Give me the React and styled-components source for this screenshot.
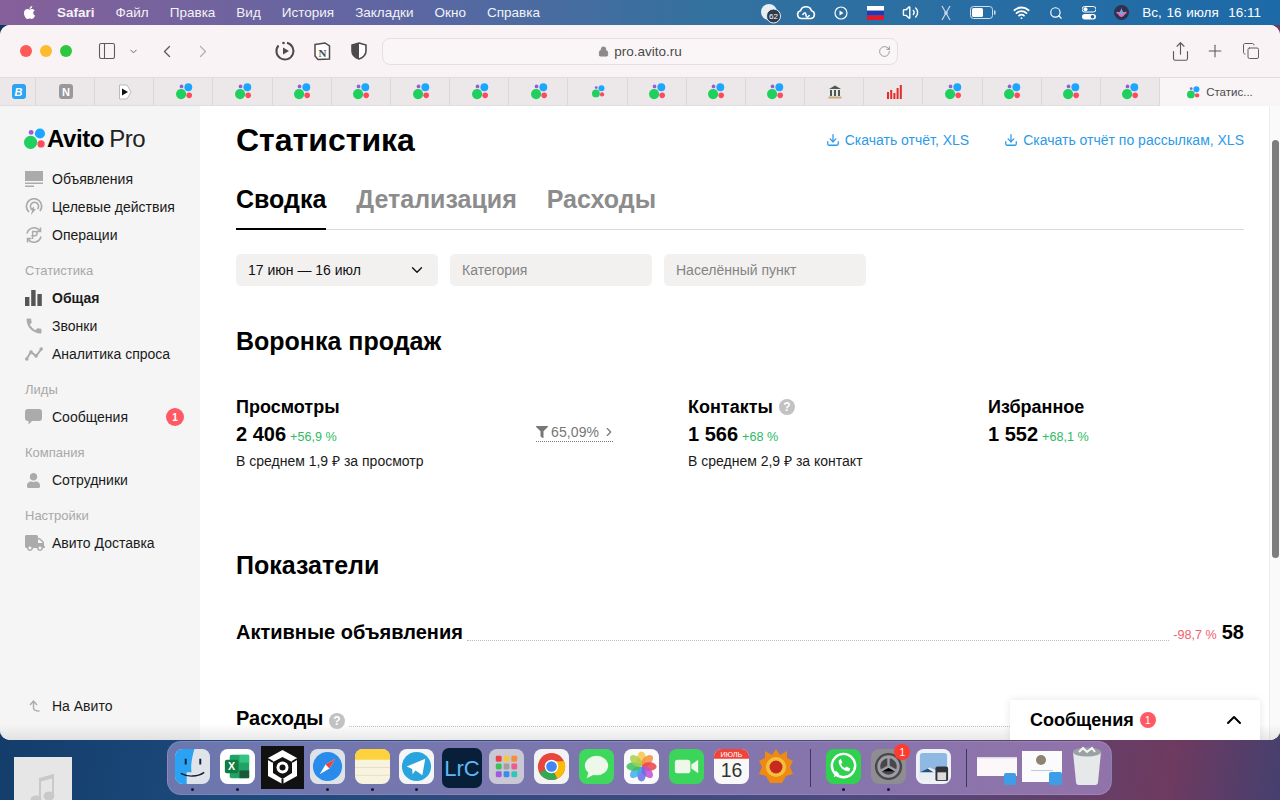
import React from "react";
import styled, { createGlobalStyle } from "styled-components";
import {
  ChevronDown,
  ChevronLeft,
  ChevronRight,
  ChevronUp,
  Download,
  Lock,
  Plus,
  RotateCw,
  Search,
  Share,
  Volume2,
  Wifi,
  PanelLeft,
  Copy,
} from "lucide-react";
import { FaApple, FaTruck, FaUser, FaFilter } from "react-icons/fa";
import { MdCall } from "react-icons/md";

const GlobalStyle = createGlobalStyle`
  html, body {
    margin: 0;
    padding: 0;
    width: 1280px;
    height: 800px;
    overflow: hidden;
    font-family: "Liberation Sans", Arial, sans-serif;
    color: #000;
  }
  * { box-sizing: border-box; }
`;

const Screen = styled.div`
  position: relative;
  width: 1280px;
  height: 800px;
  display: flex;
  flex-direction: column;
  overflow: hidden;
  background: linear-gradient(100deg, #0f3560 0%, #1b4a7c 25%, #4d4a80 70%, #6e3a60 92%, #45406f 100%);
`;

/* menu bar */
const MenuBar = styled.div`
  height: 25px;
  flex: none;
  display: flex;
  align-items: center;
  padding: 0 19px 0 22px;
  color: #fff;
  font-size: 13.5px;
  background: linear-gradient(90deg, #86609a 0%, #5f66a2 30%, #33719f 55%, #1d6aa8 100%);
`;

const MenuItems = styled.div`
  display: flex;
  align-items: center;
  gap: 21px;
  opacity: 0.92;
`;

const MenuItem = styled.span`
  font-weight: ${(p) => (p.$bold ? 700 : 400)};
`;

const StatusIcons = styled.div`
  margin-left: auto;
  display: flex;
  align-items: center;
  height: 25px;
`;

const StatusSlot = styled.div`
  width: ${(p) => p.$w || 35}px;
  display: flex;
  justify-content: center;
  align-items: center;
`;

const Clock = styled.span`
  margin-left: 6px;
  word-spacing: 1px;
`;

/* safari window */
const Window = styled.div`
  position: relative;
  height: 715px;
  flex: none;
  display: flex;
  flex-direction: column;
  background: #fff;
  border-radius: 10px;
  overflow: hidden;
`;

const Toolbar = styled.div`
  height: 52px;
  flex: none;
  display: flex;
  align-items: center;
  padding-left: 20px;
  background: #f9f3f5;
  color: #5c5a5b;
`;

const Light = styled.span`
  width: 12px;
  height: 12px;
  border-radius: 50%;
  margin-right: 8px;
  background: ${(p) => p.$color};
`;

const ToolSlot = styled.div`
  width: ${(p) => p.$w}px;
  margin-left: ${(p) => p.$ml || 0}px;
  display: flex;
  justify-content: center;
  align-items: center;
  color: ${(p) => p.$color || "#5c5a5b"};
`;

const UrlBar = styled.div`
  position: relative;
  width: 516px;
  height: 27px;
  margin-left: 11px;
  display: flex;
  align-items: center;
  justify-content: center;
  gap: 5px;
  background: #faf6f7;
  border: 1px solid #e4dfe0;
  border-radius: 8px;
  font-size: 13.5px;
  color: #4b4a4a;
`;

const Reload = styled.span`
  position: absolute;
  right: 6px;
  top: 6px;
  color: #777;
  display: flex;
`;

const TabBar = styled.div`
  height: 29px;
  flex: none;
  display: flex;
  background: #ece7e8;
  border-top: 1px solid #e0dbdc;
  border-bottom: 1px solid #e2dddf;
`;

const Tab = styled.div`
  width: ${(p) => p.$w}px;
  flex: none;
  display: flex;
  align-items: center;
  justify-content: center;
  padding-left: 2px;
  border-right: 1px solid #dcd7d8;
`;

const ActiveTab = styled.div`
  flex: 1;
  display: flex;
  align-items: center;
  justify-content: center;
  gap: 6px;
  background: #f9f4f6;
  font-size: 11.5px;
  color: #4a4a4a;
  margin-bottom: -1px;
`;

const LetterIcon = styled.span`
  width: 14px;
  height: 15px;
  display: flex;
  align-items: center;
  justify-content: center;
  border-radius: 3px;
  font-size: 11px;
  font-weight: 700;
  font-style: ${(p) => (p.$italic ? "italic" : "normal")};
  color: #fff;
  background: ${(p) => p.$bg};
`;

/* page */
const Body = styled.div`
  flex: 1;
  min-height: 0;
  display: flex;
`;

const Sidebar = styled.aside`
  width: 200px;
  flex: none;
  display: flex;
  flex-direction: column;
  padding: 18px 0 20px 25px;
  background: #f5f5f5;
`;

const Logo = styled.div`
  height: 30px;
  display: flex;
  align-items: center;
  margin: 0 0 11px -1px;
  font-size: 24px;
  letter-spacing: -0.4px;
`;

const LogoBold = styled.span`
  font-weight: 700;
  margin-left: 1px;
`;

const LogoLight = styled.span`
  font-weight: 400;
  margin-left: 5px;
  color: #222;
`;

const NavItem = styled.div`
  height: 28px;
  display: flex;
  align-items: center;
  font-size: 14px;
  font-weight: ${(p) => (p.$active ? 700 : 400)};
  color: #1a1a1a;
`;

const NavIcon = styled.span`
  width: 27px;
  flex: none;
  display: flex;
  align-items: center;
  color: ${(p) => (p.$active ? "#555" : "#ababab")};
`;

const NavBadge = styled.span`
  width: 18px;
  height: 18px;
  margin-left: auto;
  margin-right: 16px;
  border-radius: 50%;
  display: flex;
  align-items: center;
  justify-content: center;
  background: #ff5a63;
  color: #fff;
  font-size: 10px;
  font-weight: 700;
`;

const NavGroup = styled.div`
  height: 35px;
  padding-top: 15px;
  line-height: 14px;
  font-size: 13px;
  color: #a8a8a8;
`;

const BackLink = styled(NavItem)`
  margin-top: auto;
`;

const Main = styled.main`
  flex: 1;
  min-width: 0;
  padding: 0 36px;
  background: #fff;
`;

const TitleRow = styled.div`
  height: 68px;
  display: flex;
  align-items: center;
  justify-content: space-between;
`;

const Title = styled.h1`
  margin: 0;
  font-size: 32px;
  font-weight: 700;
`;

const Reports = styled.div`
  display: flex;
  gap: 35px;
`;

const ReportLink = styled.a`
  display: flex;
  align-items: center;
  gap: 5px;
  font-size: 14px;
  color: #2d9ae8;
`;

const Tabs = styled.div`
  height: 56px;
  display: flex;
  gap: 30px;
  border-bottom: 1px solid #d9d9d9;
`;

const PageTab = styled.div`
  height: 56px;
  line-height: 51px;
  font-size: 25px;
  font-weight: 700;
  color: ${(p) => (p.$active ? "#000" : "#8c8c8c")};
  border-bottom: ${(p) => (p.$active ? "2px solid #000" : "none")};
`;

const Filters = styled.div`
  display: flex;
  gap: 12px;
  margin-top: 24px;
`;

const Filter = styled.div`
  width: 202px;
  height: 32px;
  padding: 0 12px;
  display: flex;
  align-items: center;
  justify-content: space-between;
  border-radius: 5px;
  background: #f2f1f0;
  font-size: 14px;
  color: ${(p) => (p.$muted ? "#848484" : "#111")};
`;

const SectionTitle = styled.h2`
  margin: ${(p) => p.$mt}px 0 0;
  height: 28px;
  line-height: 28px;
  font-size: 25px;
  font-weight: 700;
`;

const Funnel = styled.div`
  display: grid;
  grid-template-columns: 300px 152px 300px 1fr;
  margin-top: 40px;
  height: 95px;
`;

const StatName = styled.div`
  display: flex;
  align-items: center;
  gap: 6px;
  height: 24px;
  font-size: 18px;
  font-weight: 700;
`;

const StatLine = styled.div`
  display: flex;
  align-items: baseline;
  gap: 4px;
  height: 32px;
  line-height: 30px;
  font-size: 20px;
  font-weight: 700;
`;

const Delta = styled.span`
  font-size: 12.6px;
  font-weight: 400;
  color: ${(p) => (p.$down ? "#f0606e" : "#2dbb64")};
`;

const StatNote = styled.div`
  font-size: 14px;
  line-height: 18px;
  color: #1a1a1a;
  margin-top: 1px;
`;

const Help = styled.span`
  width: 16px;
  height: 16px;
  border-radius: 50%;
  display: inline-flex;
  align-items: center;
  justify-content: center;
  background: #c2c2c2;
  color: #fff;
  font-size: 12px;
  font-weight: 700;
`;

const Conversion = styled.div`
  align-self: start;
  justify-self: start;
  display: flex;
  align-items: center;
  gap: 3px;
  margin-top: 29px;
  padding-bottom: 1px;
  font-size: 14px;
  letter-spacing: 0.1px;
  color: #777;
  border-bottom: 1px dotted #777;
`;

const MetricRow = styled.div`
  display: flex;
  align-items: baseline;
  margin-top: ${(p) => p.$mt}px;
  height: 28px;
  font-size: 20px;
  font-weight: 700;
`;

const Leader = styled.span`
  flex: 1;
  align-self: flex-end;
  margin: 0 4px 8px;
  border-bottom: 1px dotted #bdbdbd;
`;

const MetricValue = styled.span`
  margin-left: 5px;
`;

/* things lying over the page */
const ScrollTrack = styled.div`
  position: absolute;
  top: 81px;
  right: 0;
  bottom: 0;
  width: 11px;
  background: #fafafa;
  border-left: 1px solid #ececec;
`;

const ScrollThumb = styled.div`
  position: absolute;
  top: 34px;
  left: 2px;
  width: 7px;
  height: 418px;
  border-radius: 4px;
  background: #7d7d7d;
`;

const MessagesPanel = styled.div`
  position: absolute;
  left: 1010px;
  bottom: 0;
  width: 250px;
  height: 40px;
  padding: 0 14px 0 20px;
  display: flex;
  align-items: center;
  gap: 6px;
  background: #fff;
  box-shadow: 0 0 8px rgba(0, 0, 0, 0.1);
  font-size: 18px;
  font-weight: 700;
`;

const PanelBadge = styled.span`
  width: 16px;
  height: 16px;
  border-radius: 50%;
  display: flex;
  align-items: center;
  justify-content: center;
  background: #ff5a63;
  color: #fff;
  font-size: 10px;
  font-weight: 400;
`;

const BottomFade = styled.div`
  position: absolute;
  left: 0;
  right: 0;
  bottom: 0;
  height: 16px;
  pointer-events: none;
  background: linear-gradient(180deg, rgba(200, 200, 200, 0), rgba(190, 190, 190, 0.35));
`;

/* desktop and dock */
const Desktop = styled.div`
  position: relative;
  flex: 1;
  display: flex;
  padding: 1px 0 0 167px;
`;

const DesktopFile = styled.div`
  position: absolute;
  left: 14px;
  top: 17px;
  width: 58px;
  height: 60px;
  display: flex;
  justify-content: center;
  padding-top: 16px;
  background: #e6e6e6;
  color: #c9c9c9;
`;

const Dock = styled.div`
  width: 945px;
  height: 54px;
  display: flex;
  padding: 0 0 0 2px;
  border-radius: 14px;
  background: linear-gradient(90deg, #6b77ae 0%, #7f76ae 50%, #9173aa 100%);
  border: 1px solid rgba(255, 255, 255, 0.12);
`;

const DockSlot = styled.div`
  position: relative;
  width: 44.9px;
  flex: none;
  display: flex;
  justify-content: center;
  padding-top: 7px;
  &::after {
    content: "";
    display: ${(p) => (p.$running ? "block" : "none")};
    position: absolute;
    left: 50%;
    bottom: 3px;
    width: 3px;
    height: 3px;
    margin-left: -1.5px;
    border-radius: 50%;
    background: #14182c;
  }
`;

const DockDivider = styled.div`
  width: 1px;
  height: 38px;
  margin: 7px ${(p) => p.$mr}px 0 ${(p) => p.$ml}px;
  flex: none;
  background: #3c3a5a;
`;

const DockBadge = styled.span`
  position: absolute;
  top: 2px;
  right: 1px;
  width: 16px;
  height: 16px;
  border-radius: 50%;
  display: flex;
  align-items: center;
  justify-content: center;
  background: #ff3b30;
  color: #fff;
  font-size: 10px;
`;

const AvitoMark = ({ size = 14 }) => (
  <svg width={size} height={size} viewBox="0 0 20 20">
    <circle cx="6" cy="13" r="6" fill="#1fd05f" />
    <circle cx="14.5" cy="5" r="4.6" fill="#1ba7ff" />
    <circle cx="15.5" cy="14.5" r="3.3" fill="#ff4a5c" />
    <circle cx="6.5" cy="4" r="2.2" fill="#9a5cdc" />
  </svg>
);

const ListIcon = () => (
  <svg width="18" height="16" viewBox="0 0 18 16" fill="currentColor">
    <rect x="0" y="0" width="18" height="10" />
    <rect x="0" y="11.5" width="18" height="1.5" />
    <rect x="0" y="14.5" width="9" height="1.5" />
  </svg>
);

const TargetIcon = () => (
  <svg width="18" height="18" viewBox="0 0 18 18" fill="none" stroke="currentColor" strokeWidth="1.7">
    <path d="M4 14A7.6 7.6 0 1 1 15 13" />
    <path d="M6.5 11A4 4 0 1 1 12.5 11" />
    <path d="M9 8.5 L5 12 L7 12 L6 17 L11 11 L9 11 Z" fill="currentColor" stroke="none" />
  </svg>
);

const OperationsIcon = () => (
  <svg width="18" height="18" viewBox="0 0 18 18" fill="none" stroke="currentColor" strokeWidth="1.6">
    <path d="M2 7.5A7.2 7.2 0 0 1 15 5" />
    <path d="M16 10.5A7.2 7.2 0 0 1 3 13" />
    <path d="M15.5 1.5V5.5H11.5M2.5 16.5V12.5H6.5" />
    <path d="M7.6 13V5.5H10a2 2 0 0 1 0 4.2H6.4" strokeWidth="1.4" />
  </svg>
);

const BarsIcon = () => (
  <svg width="17" height="16" viewBox="0 0 17 16" fill="currentColor">
    <rect x="0" y="7" width="4.4" height="9" />
    <rect x="6.2" y="0" width="4.4" height="16" />
    <rect x="12.4" y="4" width="4.4" height="12" />
  </svg>
);

const TrendIcon = () => (
  <svg width="18" height="14" viewBox="0 0 18 14" fill="none" stroke="currentColor" strokeWidth="2">
    <path d="M1.5 12 L6 5 L11 9 L16.5 2" />
    <g fill="currentColor" stroke="none">
      <circle cx="1.8" cy="12" r="1.8" />
      <circle cx="6" cy="5" r="1.8" />
      <circle cx="11" cy="9" r="1.8" />
      <circle cx="16.2" cy="2" r="1.8" />
    </g>
  </svg>
);

const ChatIcon = () => (
  <svg width="17" height="16" viewBox="0 0 17 16" fill="currentColor">
    <path d="M3 0H14a3 3 0 0 1 3 3V9a3 3 0 0 1-3 3H7L3.5 15.5V12H3a3 3 0 0 1-3-3V3a3 3 0 0 1 3-3Z" />
  </svg>
);

const BackArrow = () => (
  <svg width="14" height="14" viewBox="0 0 14 14" fill="none" stroke="currentColor" strokeWidth="1.4" style={{ marginLeft: 3 }}>
    <path d="M2 6 L5.5 2 L9 6M5.5 2V9c0 2 1.5 3 6 3" />
  </svg>
);

const MusicNote = () => (
  <svg width="26" height="34" viewBox="0 0 26 34" fill="currentColor">
    <path d="M9 5 L24 1 V5 L11 8.500 V27 H9Z" />
    <rect x="22" y="1" width="2" height="22" />
    <ellipse cx="6" cy="27" rx="5.500" ry="4.500" />
    <ellipse cx="19" cy="23" rx="5.500" ry="4.500" />
  </svg>
);

const ExtensionPlay = () => (
  <svg width="22" height="22" viewBox="0 0 22 22" fill="none" stroke="#4c4a4b" strokeWidth="2">
    <path d="M13 2.8A8.5 8.5 0 1 1 4.5 5.5" />
    <circle cx="9.5" cy="3" r="1.3" fill="#4c4a4b" stroke="none" />
    <path d="M9 7.5 L15 11 L9 14.5 Z" fill="#4c4a4b" stroke="none" />
  </svg>
);

const NotionGlyph = () => (
  <svg width="20" height="20" viewBox="0 0 20 20">
    <path d="M3 3.5 L13 2 L17.5 5 V18 L6 18.5 L3 15 Z" fill="#fff" stroke="#4c4a4b" strokeWidth="1.5" />
    <text x="6.5" y="15.5" fontSize="11" fontWeight="700" fontFamily="Liberation Serif, serif" fill="#4c4a4b">N</text>
  </svg>
);

const ShieldGlyph = () => (
  <svg width="16" height="18" viewBox="0 0 16 18">
    <path d="M8 1 L15 3 V9c0 4-3 6.5-7 8-4-1.500-7-4-7-8V3Z" fill="#fff" stroke="#4c4a4b" strokeWidth="1.6" />
    <path d="M8 1 V17c-4-1.500-7-4-7-8V3Z" fill="#4c4a4b" />
  </svg>
);

const PlayTab = () => (
  <svg width="14" height="16" viewBox="0 0 14 16">
    <path d="M1.500 1H9l4 7-4 7H1.500Z" fill="#fff" stroke="#bbb" />
    <path d="M4 4.500 L10 8 L4 11.500Z" fill="#111" />
  </svg>
);

const BankGlyph = () => (
  <svg width="14" height="14" viewBox="0 0 14 14" fill="#4e5a4f">
    <path d="M1 4 L7 0.500 L13 4Z" />
    <rect x="2" y="5" width="2" height="6" />
    <rect x="6" y="5" width="2" height="6" />
    <rect x="10" y="5" width="2" height="6" />
    <rect x="0.500" y="11.500" width="13" height="2" fill="#c4ad7c" />
  </svg>
);

const ChartGlyph = () => (
  <svg width="15" height="15" viewBox="0 0 15 15" fill="#e32b2b">
    <rect x="0" y="8" width="2" height="7" />
    <rect x="3.200" y="6" width="2" height="9" />
    <rect x="6.400" y="9" width="2" height="6" />
    <rect x="9.600" y="4" width="2" height="11" />
    <rect x="12.800" y="1" width="2" height="14" />
  </svg>
);

const FlagGlyph = () => (
  <svg width="17" height="14" viewBox="0 0 17 14">
    <rect width="17" height="4.700" fill="#fff" />
    <rect y="4.700" width="17" height="4.700" fill="#2138b5" />
    <rect y="9.400" width="17" height="4.600" fill="#e0192c" />
  </svg>
);

const CcGlyph = () => (
  <svg width="20" height="14" viewBox="0 0 20 14" fill="none" stroke="#fff" strokeWidth="1.600">
    <path d="M5 12.500a4 4 0 0 1-.5-7.800 5.800 5.800 0 0 1 11 0 4 4 0 0 1-.5 7.800Z" />
    <path d="M6.500 9c2-3 3-3 3.500 0s2 3 3.500 0" />
  </svg>
);

const BadgeGlyph = () => (
  <svg width="22" height="22" viewBox="0 0 22 22">
    <circle cx="9" cy="10" r="8" fill="#e8eef4" />
    <circle cx="13.500" cy="14" r="7" fill="#2f3a4c" stroke="#e8eef4" />
    <text x="13.500" y="17" fontSize="8" fill="#fff" textAnchor="middle" fontFamily="Liberation Sans, sans-serif">62</text>
  </svg>
);

const PlayCircle = () => (
  <svg width="14" height="14" viewBox="0 0 14 14" fill="none" stroke="#fff" strokeWidth="1.200">
    <circle cx="7" cy="7" r="6" />
    <path d="M5.500 4.500 L9.500 7 L5.500 9.500Z" fill="#fff" stroke="none" />
  </svg>
);

const MuteGlyph = () => (
  <svg width="14" height="16" viewBox="0 0 14 16" stroke="#c8d6e6" strokeWidth="1.200" fill="none">
    <path d="M3 1 L11 15M11 1 L3 15" />
    <circle cx="7" cy="8" r="1.200" fill="#c8d6e6" />
  </svg>
);

const BatteryGlyph = () => (
  <svg width="26" height="13" viewBox="0 0 26 13">
    <rect x="0.500" y="0.500" width="22" height="12" rx="3" fill="none" stroke="#cfe0ef" />
    <rect x="2" y="2" width="11" height="9" rx="1.500" fill="#fff" />
    <rect x="24" y="4.500" width="1.500" height="4" fill="#cfe0ef" />
  </svg>
);

const ControlGlyph = () => (
  <svg width="14" height="14" viewBox="0 0 14 14">
    <rect y="0.500" width="14" height="5.500" rx="2.750" fill="none" stroke="#fff" />
    <circle cx="3.500" cy="3.250" r="2" fill="#fff" />
    <rect y="8" width="14" height="5.500" rx="2.750" fill="#fff" />
    <circle cx="10.500" cy="10.750" r="1.800" fill="#24649f" />
  </svg>
);

const SiriGlyph = () => (
  <svg width="15" height="15" viewBox="0 0 15 15">
    <circle cx="7.500" cy="7.500" r="7.500" fill="#2b3350" />
    <path d="M2 8c2-4 3 3 5.500-5 2 8 3 1 5.500 5-3 1-3 4-5.500 4S5 9 2 8Z" fill="#e46ca6" />
    <path d="M7.500 4c1 4 2 4 3 4-1 2-5 2-6 0 1 0 2 0 3-4Z" fill="#5fb0ef" />
  </svg>
);

const Squircle = ({ fill, children }) => (
  <svg width="35" height="35" viewBox="0 0 36 36">
    <rect width="36" height="36" rx="8" fill={fill} />
    {children}
  </svg>
);

const dockIcons = {
  finder: (
    <Squircle fill="#dfe4ea">
      <path d="M0 8a8 8 0 0 1 8-8H20C17 10 16 18 17 24H12V36H8a8 8 0 0 1-8-8Z" fill="#2aa3f5" />
      <path d="M6 25c7 4 17 4 24-1" fill="none" stroke="#123" strokeWidth="1.500" />
      <path d="M11 10v6M26 10v6" stroke="#123" strokeWidth="2" />
    </Squircle>
  ),
  excel: (
    <Squircle fill="#fff">
      <rect x="10" y="6" width="20" height="24" rx="2" fill="#21a366" />
      <rect x="20" y="6" width="10" height="8" fill="#33c481" />
      <rect x="20" y="22" width="10" height="8" fill="#185c37" />
      <rect x="5" y="11" width="14" height="14" rx="2" fill="#107c41" />
      <text x="12" y="22" fontSize="11" fontWeight="700" fill="#fff" textAnchor="middle" fontFamily="Liberation Sans, sans-serif">X</text>
    </Squircle>
  ),
  hive: (
    <svg width="43" height="43" viewBox="0 0 43 43" style={{ marginTop: -3 }}>
      <rect width="43" height="43" fill="#111" />
      <path d="M21.500 4 L36 12 V30 L21.500 38 L7 30 V12Z" fill="#fff" />
      <path d="M21.500 11 L12 16 V27 L21.500 33 L31 27 V16Z" fill="#111" />
      <circle cx="21.500" cy="21.500" r="6" fill="#fff" />
      <circle cx="21.500" cy="21.500" r="3" fill="#111" />
      <path d="M21.500 33V38M7 13 L12 16M36 13 L31 16" stroke="#111" strokeWidth="2" />
    </svg>
  ),
  safari: (
    <Squircle fill="#dfe3e8">
      <circle cx="18" cy="18" r="15" fill="#2a8cea" />
      <path d="M26 10 L20 20 L10 26 L16 16Z" fill="#fff" />
      <path d="M26 10 L20 20 L16 16Z" fill="#f0433a" />
    </Squircle>
  ),
  notes: (
    <Squircle fill="#f7f3df">
      <path d="M0 8a8 8 0 0 1 8-8H28a8 8 0 0 1 8 8V11H0Z" fill="#fdd23c" />
      <path d="M0 19H36M0 27H36" stroke="#e4dfc8" />
    </Squircle>
  ),
  telegram: (
    <Squircle fill="#f4f5f7">
      <circle cx="18" cy="18" r="15" fill="#2aa4de" />
      <path d="M8 18 L27 10 L24 27 L17 22 L14 26 L13.500 20.500Z" fill="#fff" />
    </Squircle>
  ),
  lrc: (
    <svg width="40" height="40" viewBox="0 0 40 40" style={{ marginTop: -1 }}>
      <rect width="40" height="40" rx="7" fill="#071f38" />
      <text x="20" y="28" fontSize="22" fill="#5fb8f5" textAnchor="middle" fontFamily="Liberation Sans, sans-serif">LrC</text>
    </svg>
  ),
  launchpad: (
    <Squircle fill="#c9c8d4">
      {["#e8424a", "#f6c544", "#f58e3c", "#3cc05e", "#a0a0a0", "#ee5b8e", "#9a5ce0", "#3c8cf0", "#2ec7b8"].map((c, i) => (
        <rect key={c} x={7 + (i % 3) * 8} y={7 + Math.floor(i / 3) * 8} width="6" height="6" rx="1.500" fill={c} />
      ))}
    </Squircle>
  ),
  chrome: (
    <Squircle fill="#f3f3f3">
      <circle cx="18" cy="18" r="14" fill="#e8453c" />
      <path d="M18 18 L5.500 24.500A14 14 0 0 0 24 30.500Z" fill="#34a853" />
      <path d="M18 18 L24 30.500A14 14 0 0 0 31 12.500 L18 12.500Z" fill="#fbbc05" />
      <circle cx="18" cy="18" r="7" fill="#fff" />
      <circle cx="18" cy="18" r="5.500" fill="#4285f4" />
    </Squircle>
  ),
  messages: (
    <Squircle fill="#3ed95c">
      <ellipse cx="18" cy="17" rx="12" ry="10" fill="#eef8ea" />
      <path d="M10 23 L8 30 L16 26Z" fill="#eef8ea" />
    </Squircle>
  ),
  photos: (
    <Squircle fill="#fafafa">
      {["#f6c544", "#f58e3c", "#e8424a", "#c04fd0", "#6a6ae8", "#3cb0e8", "#3cc05e", "#a8d04a"].map((c, i) => (
        <ellipse key={c} cx="18" cy="10" rx="4.500" ry="7.500" fill={c} opacity="0.85" transform={`rotate(${i * 45} 18 18)`} />
      ))}
    </Squircle>
  ),
  facetime: (
    <Squircle fill="#3ad55a">
      <rect x="6" y="11" width="16" height="14" rx="3" fill="#eef8ea" />
      <path d="M23 16 L30 11 V25 L23 20Z" fill="#eef8ea" />
    </Squircle>
  ),
  calendar: (
    <Squircle fill="#f8f8f8">
      <path d="M0 8a8 8 0 0 1 8-8H28a8 8 0 0 1 8 8V10H0Z" fill="#f0433a" />
      <text x="18" y="8" fontSize="7.500" fill="#fff" textAnchor="middle" fontFamily="Liberation Sans, sans-serif">ИЮЛЬ</text>
      <text x="18" y="29" fontSize="20" fill="#333" textAnchor="middle" fontFamily="Liberation Sans, sans-serif">16</text>
    </Squircle>
  ),
  xnview: (
    <svg width="38" height="38" viewBox="0 0 38 38" style={{ marginTop: -2 }}>
      <path d="M19 2 L23 8 L30 4 L30 11 L36 14 L33 20 L36 27 L29 29 L25 36 H13 L9 29 L2 27 L5 20 L2 14 L8 11 L8 4 L15 8Z" fill="#ee8a12" />
      <circle cx="19" cy="20" r="10" fill="#f2c040" />
      <circle cx="19" cy="20" r="6.500" fill="#c8281e" />
    </svg>
  ),
  whatsapp: (
    <Squircle fill="#2fd14e">
      <circle cx="18" cy="17" r="12" fill="none" stroke="#fff" strokeWidth="2.500" />
      <path d="M8 29 L10 22 L14 26Z" fill="#fff" />
      <path d="M13 12c0 6 5 11 11 11l1-3-4-2-1.500 1.500c-2-.5-3.500-2-4-4L17 14l-2-4Z" fill="#fff" />
    </Squircle>
  ),
  settings: (
    <Squircle fill="#8d8d92">
      <circle cx="18" cy="18" r="14" fill="#47474c" />
      <circle cx="18" cy="18" r="10" fill="none" stroke="#9c9ca2" strokeWidth="3" />
      <path d="M18 8V18M9 23 L18 18 L27 23" stroke="#9c9ca2" strokeWidth="2.500" />
    </Squircle>
  ),
  preview: (
    <Squircle fill="#eef1f5">
      <rect x="4" y="4" width="28" height="28" rx="3" fill="#8fb8e2" />
      <path d="M4 24 L14 19 L32 27 V32 H4Z" fill="#e8eef2" />
      <path d="M4 24 L12 20 L18 24Z" fill="#23507e" />
      <rect x="20" y="18" width="13" height="15" rx="2" fill="#33343a" />
      <rect x="22" y="24" width="9" height="8" fill="#dcdcdc" />
    </Squircle>
  ),
  thumbA: (
    <svg width="42" height="37" viewBox="0 0 42 37">
      <rect x="1" y="8" width="40" height="19" fill="#fcf7f9" />
      <rect x="1" y="8" width="40" height="1.500" fill="#dedbe6" />
      <rect x="28" y="24" width="12" height="12" rx="2" fill="#3f9de8" />
    </svg>
  ),
  thumbB: (
    <svg width="42" height="38" viewBox="0 0 42 38" style={{ marginTop: -1 }}>
      <rect x="1" y="3" width="40" height="31" fill="#fbfbfb" />
      <circle cx="20" cy="12" r="5" fill="#8c8470" />
      <rect x="10" y="22" width="22" height="1" fill="#b8cde0" />
      <rect x="28" y="24" width="13" height="13" rx="2" fill="#3f9de8" />
    </svg>
  ),
  trash: (
    <svg width="32" height="40" viewBox="0 0 32 40" style={{ marginTop: -3, flex: "none" }}>
      <path d="M2 6 L5 36a3 3 0 0 0 3 3H24a3 3 0 0 0 3-3 L30 6Z" fill="#e6e9ea" />
      <ellipse cx="16" cy="6" rx="14" ry="4.500" fill="#9aa0a3" />
      <path d="M8 6 L12 2 L16 6 L21 2 L24 6" stroke="#f4f4f4" strokeWidth="2" fill="none" />
    </svg>
  ),
};

const tabs = ["v", "n", "p", "a", "a", "a", "a", "a", "a", "a", "s", "a", "a", "a", "b", "c", "a", "a", "a", "a"];

const tabIcon = (kind) => {
  if (kind === "v") return <LetterIcon $bg="#2ba4f2" $italic>В</LetterIcon>;
  if (kind === "n") return <LetterIcon $bg="#9a989c">N</LetterIcon>;
  if (kind === "p") return <PlayTab />;
  if (kind === "b") return <BankGlyph />;
  if (kind === "c") return <ChartGlyph />;
  return <AvitoMark size={kind === "s" ? 13 : 17} />;
};

const menu = ["Файл", "Правка", "Вид", "История", "Закладки", "Окно", "Справка"];

const leftDock = [
  ["finder", true], ["excel", true], ["hive", false], ["safari", true], ["notes", true], ["telegram", true],
  ["lrc", false], ["launchpad", false], ["chrome", false], ["messages", false], ["photos", false],
  ["facetime", false], ["calendar", false], ["xnview", false],
];

export default function App() {
  return (
    <Screen>
      <GlobalStyle />
      <MenuBar>
        <FaApple size={15} style={{ marginRight: 20 }} />
        <MenuItems>
          <MenuItem $bold>Safari</MenuItem>
          {menu.map((m) => <MenuItem key={m}>{m}</MenuItem>)}
        </MenuItems>
        <StatusIcons>
          <StatusSlot><BadgeGlyph /></StatusSlot>
          <StatusSlot><CcGlyph /></StatusSlot>
          <StatusSlot><PlayCircle /></StatusSlot>
          <StatusSlot><FlagGlyph /></StatusSlot>
          <StatusSlot><Volume2 size={17} color="#fff" /></StatusSlot>
          <StatusSlot><MuteGlyph /></StatusSlot>
          <StatusSlot $w={40}><BatteryGlyph /></StatusSlot>
          <StatusSlot $w={37}><Wifi size={17} color="#fff" strokeWidth={2.6} /></StatusSlot>
          <StatusSlot $w={32}><Search size={14} color="#fff" /></StatusSlot>
          <StatusSlot $w={34}><ControlGlyph /></StatusSlot>
          <StatusSlot $w={30}><SiriGlyph /></StatusSlot>
        </StatusIcons>
        <Clock>Вс, 16 июля&nbsp; 16:11</Clock>
      </MenuBar>

      <Window>
        <Toolbar>
          <Light $color="#fc5b57" />
          <Light $color="#fdbc2e" />
          <Light $color="#2ec840" />
          <ToolSlot $w={24} $ml={15}><PanelLeft size={20} strokeWidth={1.3} /></ToolSlot>
          <ToolSlot $w={14} $ml={7}><ChevronDown size={11} /></ToolSlot>
          <ToolSlot $w={20} $ml={17}><ChevronLeft size={21} strokeWidth={1.6} /></ToolSlot>
          <ToolSlot $w={20} $ml={16} $color="#b5b1b2"><ChevronRight size={21} strokeWidth={1.6} /></ToolSlot>
          <ToolSlot $w={24} $ml={60}><ExtensionPlay /></ToolSlot>
          <ToolSlot $w={24} $ml={13}><NotionGlyph /></ToolSlot>
          <ToolSlot $w={24} $ml={13}><ShieldGlyph /></ToolSlot>
          <UrlBar>
            <Lock size={11} color="#8a8a8a" fill="#8a8a8a" />
            pro.avito.ru
            <Reload><RotateCw size={13} strokeWidth={1.3} /></Reload>
          </UrlBar>
          <ToolSlot $w={24} $ml={270}><Share size={21} strokeWidth={1.3} /></ToolSlot>
          <ToolSlot $w={24} $ml={11}><Plus size={20} strokeWidth={1.3} /></ToolSlot>
          <ToolSlot $w={24} $ml={12}><Copy size={18} strokeWidth={1.3} /></ToolSlot>
        </Toolbar>

        <TabBar>
          {tabs.map((t, i) => (
            <Tab key={i} $w={i === 0 ? 36 : 59.16}>{tabIcon(t)}</Tab>
          ))}
          <ActiveTab><AvitoMark size={13} />Статис...</ActiveTab>
        </TabBar>

        <Body>
          <Sidebar>
            <Logo>
              <AvitoMark size={22} />
              <LogoBold>Avito</LogoBold>
              <LogoLight>Pro</LogoLight>
            </Logo>
            <NavItem><NavIcon><ListIcon /></NavIcon>Объявления</NavItem>
            <NavItem><NavIcon><TargetIcon /></NavIcon>Целевые действия</NavItem>
            <NavItem><NavIcon><OperationsIcon /></NavIcon>Операции</NavItem>
            <NavGroup>Статистика</NavGroup>
            <NavItem $active><NavIcon $active><BarsIcon /></NavIcon>Общая</NavItem>
            <NavItem><NavIcon><MdCall size={20} style={{ marginLeft: -1 }} /></NavIcon>Звонки</NavItem>
            <NavItem><NavIcon><TrendIcon /></NavIcon>Аналитика спроса</NavItem>
            <NavGroup>Лиды</NavGroup>
            <NavItem>
              <NavIcon><ChatIcon /></NavIcon>Сообщения
              <NavBadge>1</NavBadge>
            </NavItem>
            <NavGroup>Компания</NavGroup>
            <NavItem><NavIcon><FaUser size={15} style={{ marginLeft: 1 }} /></NavIcon>Сотрудники</NavItem>
            <NavGroup>Настройки</NavGroup>
            <NavItem><NavIcon><FaTruck size={20} /></NavIcon>Авито Доставка</NavItem>
            <BackLink><NavIcon><BackArrow /></NavIcon>На Авито</BackLink>
          </Sidebar>

          <Main>
            <TitleRow>
              <Title>Статистика</Title>
              <Reports>
                <ReportLink><Download size={14} strokeWidth={2.2} />Скачать отчёт, XLS</ReportLink>
                <ReportLink><Download size={14} strokeWidth={2.2} />Скачать отчёт по рассылкам, XLS</ReportLink>
              </Reports>
            </TitleRow>
            <Tabs>
              <PageTab $active>Сводка</PageTab>
              <PageTab>Детализация</PageTab>
              <PageTab>Расходы</PageTab>
            </Tabs>
            <Filters>
              <Filter>17 июн — 16 июл<ChevronDown size={18} strokeWidth={1.8} /></Filter>
              <Filter $muted>Категория</Filter>
              <Filter $muted>Населённый пункт</Filter>
            </Filters>

            <SectionTitle $mt={41}>Воронка продаж</SectionTitle>
            <Funnel>
              <div>
                <StatName>Просмотры</StatName>
                <StatLine>2 406 <Delta>+56,9 %</Delta></StatLine>
                <StatNote>В среднем 1,9 ₽ за просмотр</StatNote>
              </div>
              <Conversion>
                <FaFilter size={12} />65,09%<ChevronRight size={14} style={{ marginRight: -3 }} />
              </Conversion>
              <div>
                <StatName>Контакты <Help>?</Help></StatName>
                <StatLine>1 566 <Delta>+68 %</Delta></StatLine>
                <StatNote>В среднем 2,9 ₽ за контакт</StatNote>
              </div>
              <div>
                <StatName>Избранное</StatName>
                <StatLine>1 552 <Delta>+68,1 %</Delta></StatLine>
              </div>
            </Funnel>

            <SectionTitle $mt={61}>Показатели</SectionTitle>
            <MetricRow $mt={42}>
              Активные объявления
              <Leader />
              <Delta $down>-98,7 %</Delta>
              <MetricValue>58</MetricValue>
            </MetricRow>
            <MetricRow $mt={58}>
              Расходы&nbsp;<Help>?</Help>
              <Leader />
            </MetricRow>
          </Main>
        </Body>

        <ScrollTrack><ScrollThumb /></ScrollTrack>
        <BottomFade />
        <MessagesPanel>
          Сообщения
          <PanelBadge>1</PanelBadge>
          <ChevronUp size={24} strokeWidth={2} style={{ marginLeft: "auto" }} />
        </MessagesPanel>
      </Window>

      <Desktop>
        <DesktopFile><MusicNote /></DesktopFile>
        <Dock>
          {leftDock.map(([name, running]) => (
            <DockSlot key={name} $running={running}>{dockIcons[name]}</DockSlot>
          ))}
          <DockDivider $ml={12} $mr={10} />
          <DockSlot $running>{dockIcons.whatsapp}</DockSlot>
          <DockSlot $running>
            {dockIcons.settings}
            <DockBadge>1</DockBadge>
          </DockSlot>
          <DockSlot>{dockIcons.preview}</DockSlot>
          <DockDivider $ml={10} $mr={7.5} />
          <DockSlot>{dockIcons.thumbA}</DockSlot>
          <DockSlot>{dockIcons.thumbB}</DockSlot>
          <DockSlot>{dockIcons.trash}</DockSlot>
        </Dock>
      </Desktop>
    </Screen>
  );
}
